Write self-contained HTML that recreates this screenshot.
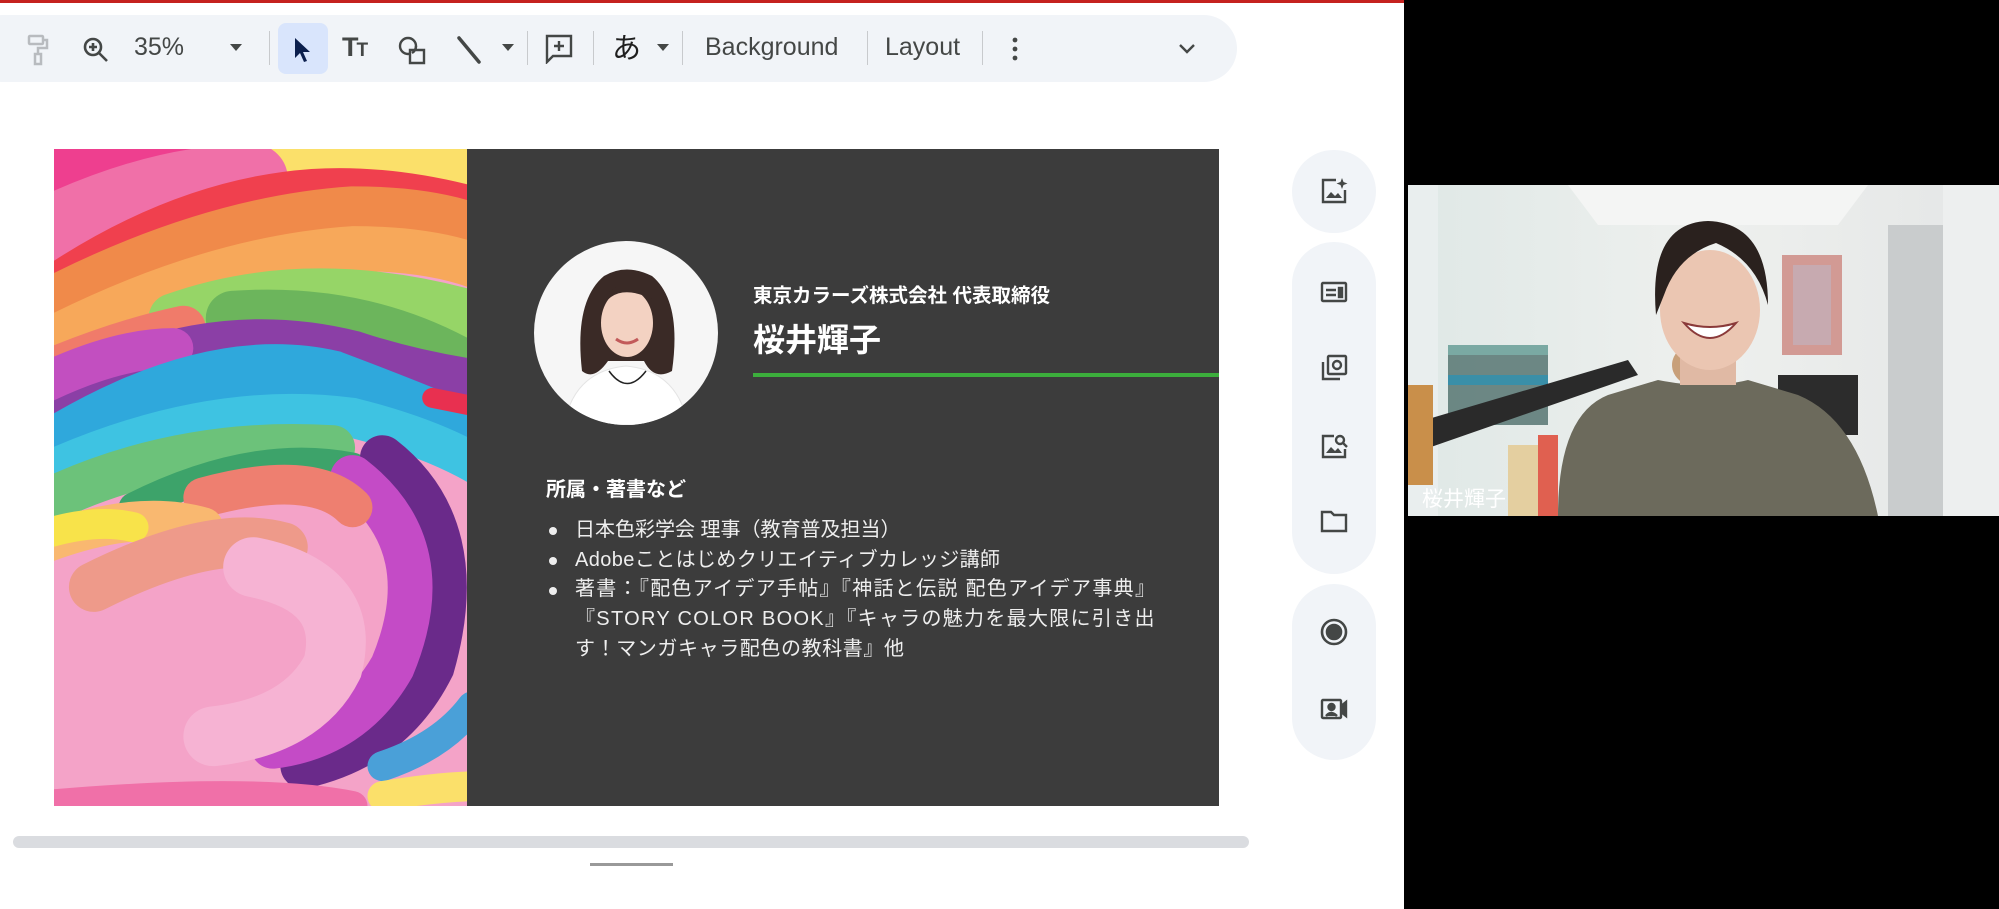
<!DOCTYPE html>
<html><head><meta charset="utf-8">
<style>
*{margin:0;padding:0;box-sizing:border-box}
body{width:1999px;height:909px;overflow:hidden;background:#fff;position:relative;font-family:"Liberation Sans","Noto Sans CJK JP",sans-serif}
.abs{position:absolute}
#red{left:0;top:0;width:1404px;height:3px;background:#c5221f}
#tb{left:-30px;top:15px;width:1267px;height:67px;background:#f1f4f8;border-radius:34px}
.tx{position:absolute;top:32px;font-size:25px;color:#444746;line-height:30px}
.dv{position:absolute;top:31px;width:1px;height:34px;background:#c8cacd}
#black{left:1404px;top:0;width:595px;height:909px;background:#000}
.pill{position:absolute;left:1292px;width:84px;background:#f1f4f8;border-radius:42px}
.ic{position:absolute;left:1320px;width:28px;height:28px}
#slide{left:54px;top:149px;width:1165px;height:657px;background:#3c3c3c;overflow:hidden}
.wt{position:absolute;color:#fff;white-space:nowrap}
.li{position:absolute;left:575px;color:#eee;font-size:20px;white-space:nowrap}
.bu{position:absolute;left:549px;width:8px;height:8px;border-radius:50%;background:#eee}
</style></head><body>
<div id="red" class="abs"></div>
<div id="tb" class="abs"></div>
<svg class="abs" style="left:26px;top:34px" width="26" height="32" viewBox="0 0 26 32" fill="none" stroke="#b8bbbf" stroke-width="2.5"><rect x="3" y="2" width="14" height="8" rx="1"/><path d="M17 6h4v8h-9v6"/><rect x="9" y="20" width="6" height="10"/></svg>
<svg class="abs" style="left:82px;top:36px" width="28" height="28" viewBox="0 0 28 28" fill="none" stroke="#444746" stroke-width="2.6"><circle cx="11" cy="11" r="8"/><path d="M17 17l8 8M11 7v8M7 11h8"/></svg>
<div class="tx" style="left:134px">35%</div>
<svg class="abs" style="left:230px;top:44px" width="12" height="8"><path d="M0 0h12L6 7z" fill="#444746"/></svg>
<div class="dv" style="left:269px"></div>
<div class="abs" style="left:278px;top:23px;width:50px;height:51px;background:#d9e5fc;border-radius:8px"></div>
<svg class="abs" style="left:292px;top:36px" width="22" height="28" viewBox="0 0 22 28"><path d="M3 2l15 14h-7l4 9-3 1-4-9-5 5z" fill="#0b1f4d"/></svg>
<div class="tx" style="left:342px;font-size:27px;font-weight:bold;letter-spacing:-2px">T<span style="font-size:19px">T</span></div>
<svg class="abs" style="left:398px;top:36px" width="30" height="30" viewBox="0 0 30 30" fill="none" stroke="#444746" stroke-width="2.4"><circle cx="10" cy="10" r="8"/><path d="M12 14h14v13H12z" fill="#f1f4f8"/><path d="M18 10a8 8 0 0 1-4 7"/></svg>
<svg class="abs" style="left:455px;top:35px" width="28" height="30"><path d="M4 3l20 24" stroke="#444746" stroke-width="3.5" stroke-linecap="round"/></svg>
<svg class="abs" style="left:502px;top:44px" width="12" height="8"><path d="M0 0h12L6 7z" fill="#444746"/></svg>
<div class="dv" style="left:527px"></div>
<svg class="abs" style="left:545px;top:34px" width="28" height="30" viewBox="0 0 28 30" fill="none" stroke="#444746" stroke-width="2.4"><path d="M2 2h24v20H8l-6 6z"/><path d="M14 7v10M9 12h10"/></svg>
<div class="dv" style="left:593px"></div>
<div class="tx" style="left:612px;top:31px;font-size:29px;color:#1f1f1f;font-family:'Noto Sans CJK JP',sans-serif">あ</div>
<svg class="abs" style="left:657px;top:44px" width="12" height="8"><path d="M0 0h12L6 7z" fill="#444746"/></svg>
<div class="dv" style="left:682px"></div>
<div class="tx" style="left:705px">Background</div>
<div class="dv" style="left:867px"></div>
<div class="tx" style="left:885px">Layout</div>
<div class="dv" style="left:982px"></div>
<svg class="abs" style="left:1010px;top:36px" width="10" height="26"><circle cx="5" cy="4" r="2.4" fill="#444746"/><circle cx="5" cy="13" r="2.4" fill="#444746"/><circle cx="5" cy="22" r="2.4" fill="#444746"/></svg>
<svg class="abs" style="left:1178px;top:43px" width="18" height="12"><path d="M2 2l7 7 7-7" stroke="#444746" stroke-width="2.4" fill="none"/></svg>

<div id="slide" class="abs">
<svg class="abs" style="left:0;top:0" width="413" height="657" viewBox="0 0 415 660" preserveAspectRatio="none">
<rect width="415" height="660" fill="#f4a3c8"/>
<g fill="none" stroke-linecap="round">
<path d="M-20 20 Q150 -10 420 10" stroke="#ee3f8f" stroke-width="60"/>
<path d="M220 10 Q330 5 430 20" stroke="#fbe06a" stroke-width="50"/>
<path d="M-20 90 Q100 30 200 30" stroke="#f070a8" stroke-width="70"/>
<path d="M-20 150 Q120 50 260 40 Q340 35 430 60" stroke="#f0404e" stroke-width="40"/>
<path d="M-20 160 Q150 70 300 60 Q380 60 430 80" stroke="#f08a4a" stroke-width="45"/>
<path d="M-20 200 Q150 110 300 100 Q380 100 430 120" stroke="#f7a85a" stroke-width="45"/>
<path d="M120 170 Q260 120 430 170" stroke="#96d567" stroke-width="50"/>
<path d="M180 170 Q320 160 430 230" stroke="#6cb55c" stroke-width="55"/>
<path d="M-20 230 Q60 195 130 180" stroke="#f07b6a" stroke-width="45"/>
<path d="M-20 270 Q140 170 300 210 Q360 230 430 240" stroke="#8b3fa6" stroke-width="55"/>
<path d="M-20 240 Q60 200 120 200" stroke="#c24fc0" stroke-width="40"/>
<path d="M-20 310 Q150 200 280 230 Q360 260 430 290" stroke="#2fa8dc" stroke-width="55"/>
<path d="M-20 330 Q150 250 300 270 Q380 290 430 320" stroke="#3ec3e2" stroke-width="40"/>
<path d="M380 250 L430 260" stroke="#e83050" stroke-width="20"/>
<path d="M-20 360 Q120 290 280 300" stroke="#6cc27a" stroke-width="45"/>
<path d="M80 360 Q200 300 300 320" stroke="#3da36a" stroke-width="30"/>
<path d="M330 310 Q420 380 380 520 Q340 600 250 620" stroke="#6a2a8a" stroke-width="45"/>
<path d="M300 330 Q390 400 340 520 Q300 590 220 600" stroke="#c44bc6" stroke-width="45"/>
<path d="M150 350 Q260 320 300 360" stroke="#ee7f70" stroke-width="40"/>
<path d="M-20 400 Q80 360 150 380" stroke="#f9b870" stroke-width="40"/>
<path d="M-20 390 Q40 370 80 380" stroke="#f8e34a" stroke-width="30"/>
<path d="M40 440 Q160 380 230 400" stroke="#ee9a8a" stroke-width="50"/>
<path d="M200 420 Q300 440 280 520 Q250 580 160 590" stroke="#f6b3d3" stroke-width="60"/>
<path d="M420 560 Q390 600 330 620" stroke="#4aa0d8" stroke-width="30"/>
<path d="M-20 660 Q200 640 300 660" stroke="#f070a8" stroke-width="30"/>
<path d="M330 650 Q390 640 430 640" stroke="#fbe06a" stroke-width="30"/>
</g>
</svg>
<svg class="abs" style="left:480px;top:92px" width="184" height="184" viewBox="0 0 184 184">
<defs><clipPath id="c"><circle cx="92" cy="92" r="92"/></clipPath></defs>
<circle cx="92" cy="92" r="92" fill="#f6f6f6"/>
<g clip-path="url(#c)">
<path d="M30 184 Q40 130 92 125 Q144 130 154 184z" fill="#fff" stroke="#e4e4e4"/>
<path d="M48 130 Q40 60 70 35 Q92 22 118 35 Q148 60 138 130 Q120 140 110 120 L74 120 Q60 140 48 130z" fill="#3a2a26"/>
<ellipse cx="93" cy="82" rx="26" ry="34" fill="#f3d2c2"/>
<path d="M66 70 Q80 40 118 58 Q110 46 92 44 Q70 46 66 70z" fill="#3a2a26"/>
<path d="M82 98 Q93 106 104 98" stroke="#c25a5a" stroke-width="3" fill="none"/>
<path d="M75 130 Q93 155 112 130" stroke="#222" stroke-width="1.5" fill="none"/>
</g></svg>
<div class="wt" style="left:699px;top:130px;font-size:19.5px;font-weight:bold">東京カラーズ株式会社 代表取締役</div>
<div class="wt" style="left:699px;top:166px;font-size:32px;font-weight:bold">桜井輝子</div>
<div class="abs" style="left:699px;top:224px;width:470px;height:4px;background:#3cae3c"></div>
<div class="wt" style="left:492px;top:324px;font-size:20px;font-weight:bold">所属・著書など</div>
<div class="bu" style="left:495px;top:378px"></div>
<div class="li" style="left:521px;top:364px">日本色彩学会 理事（教育普及担当）</div>
<div class="bu" style="left:495px;top:408px"></div>
<div class="li" style="left:521px;top:394px;letter-spacing:0.4px">Adobeことはじめクリエイティブカレッジ講師</div>
<div class="bu" style="left:495px;top:438px"></div>
<div class="li" style="left:521px;top:423px;letter-spacing:1.3px">著書：『配色アイデア手帖』『神話と伝説 配色アイデア事典』</div>
<div class="li" style="left:521px;top:453px;letter-spacing:1.3px">『STORY COLOR BOOK』『キャラの魅力を最大限に引き出</div>
<div class="li" style="left:521px;top:483px;letter-spacing:0.6px">す！マンガキャラ配色の教科書』他</div>
</div>

<div class="abs" style="left:13px;top:836px;width:1236px;height:12px;background:#dadce0;border-radius:6px"></div>
<div class="abs" style="left:590px;top:863px;width:83px;height:3px;background:#999"></div>

<div class="pill" style="top:150px;height:83px"></div>
<div class="pill" style="top:242px;height:332px"></div>
<div class="pill" style="top:584px;height:176px"></div>
<svg class="ic" style="top:177px" viewBox="0 0 28 28" fill="none" stroke="#444746" stroke-width="2.4"><path d="M16 3H3v22h22V13"/><path d="M6 21l5-6 4 4 3-3 4 5z" fill="#444746" stroke="none"/><path d="M22 1l1.5 4 4 1.5-4 1.5-1.5 4-1.5-4-4-1.5 4-1.5z" fill="#444746" stroke="none"/></svg>
<svg class="ic" style="top:278px" viewBox="0 0 28 28" fill="none" stroke="#444746" stroke-width="2.4"><rect x="2" y="5" width="24" height="18" rx="1"/><path d="M6 12h10M6 17h10"/><rect x="19" y="10" width="3" height="9" fill="#444746"/></svg>
<svg class="ic" style="top:354px" viewBox="0 0 28 28" fill="none" stroke="#444746" stroke-width="2.4"><rect x="8" y="2" width="18" height="18" rx="1"/><circle cx="17" cy="11" r="4"/><path d="M3 8v17h17"/></svg>
<svg class="ic" style="top:432px" viewBox="0 0 28 28" fill="none" stroke="#444746" stroke-width="2.4"><path d="M14 4H3v21h22V17"/><path d="M6 21l5-6 4 4 3-3 4 5z" fill="#444746" stroke="none"/><circle cx="20" cy="8" r="4"/><path d="M23 11l4 4"/></svg>
<svg class="ic" style="top:507px" viewBox="0 0 28 28" fill="none" stroke="#444746" stroke-width="2.4"><path d="M2 5h9l3 3h12v16H2z"/></svg>
<svg class="ic" style="top:618px" viewBox="0 0 28 28" fill="none" stroke="#444746" stroke-width="2.6"><circle cx="14" cy="14" r="12"/><circle cx="14" cy="14" r="7" fill="#444746"/></svg>
<svg class="ic" style="top:695px" viewBox="0 0 28 28" fill="none" stroke="#444746" stroke-width="2.4"><rect x="2" y="5" width="19" height="18" rx="1"/><path d="M21 11l5-4v14l-5-4" fill="#444746"/><circle cx="11.5" cy="12" r="3" fill="#444746"/><path d="M6 21q5-6 11 0" fill="#444746"/></svg>

<div id="black" class="abs"></div>
<svg class="abs" style="left:1408px;top:185px" width="591" height="331" viewBox="0 0 591 331">
<defs><linearGradient id="wall" x1="0" y1="0" x2="1" y2="0"><stop offset="0" stop-color="#dfe8e6"/><stop offset=".5" stop-color="#eef0ee"/><stop offset="1" stop-color="#e4e6e6"/></linearGradient></defs>
<rect width="591" height="331" fill="url(#wall)"/>
<path d="M160 0h300l-30 40H190z" fill="#f4f5f4"/>
<rect x="0" y="0" width="30" height="331" fill="#e9eeee"/>
<rect x="480" y="40" width="55" height="291" fill="#c9cccd"/>
<rect x="535" y="0" width="56" height="331" fill="#edefef"/>
<rect x="374" y="70" width="60" height="100" fill="#d29a94"/>
<rect x="385" y="80" width="38" height="80" fill="#c7aab0"/>
<rect x="40" y="160" width="100" height="80" fill="#4e6e6a" opacity=".8"/>
<rect x="40" y="160" width="100" height="10" fill="#7aa9a3"/>
<rect x="40" y="190" width="100" height="10" fill="#3a8fa8"/>
<path d="M0 240 L220 175 L230 190 L0 270z" fill="#2a2a2a"/>
<rect x="0" y="200" width="25" height="100" fill="#c98f4a"/>
<rect x="100" y="260" width="40" height="71" fill="#e4cfa0"/>
<rect x="130" y="250" width="20" height="81" fill="#e06050"/>
<rect x="370" y="190" width="80" height="60" fill="#2c2c2c"/>
<ellipse cx="290" cy="180" rx="26" ry="22" fill="#c8a07a"/>
<path d="M150 331 Q150 230 200 210 L250 195 Q300 205 340 195 L390 210 Q450 235 470 331z" fill="#6c6a5c"/>
<rect x="272" y="160" width="56" height="40" fill="#e0b9a4"/>
<ellipse cx="302" cy="125" rx="50" ry="60" fill="#ebc6b2"/>
<path d="M248 130 Q240 38 300 36 Q360 38 360 120 Q348 75 308 58 Q270 70 256 110z" fill="#2a211e"/>
<path d="M276 138 Q302 168 328 138 Q302 146 276 138z" fill="#fff" stroke="#8a3a3a" stroke-width="2"/>
</svg>
<div class="wt" style="left:1422px;top:483px;font-size:21px">桜井輝子</div>
</body></html>
